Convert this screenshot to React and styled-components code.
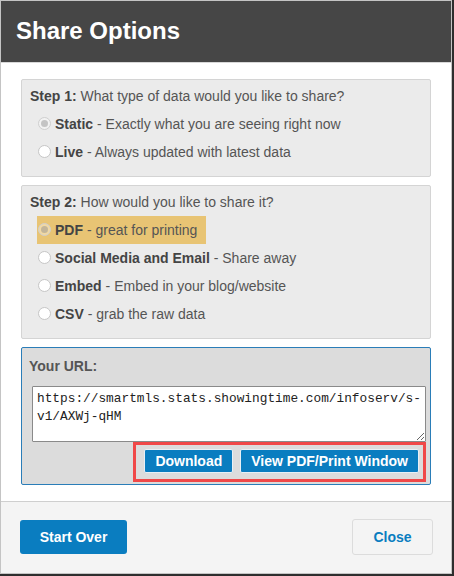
import React from 'react';
import styled, { createGlobalStyle } from 'styled-components';

const GlobalStyle = createGlobalStyle`
  html, body {
    margin: 0;
    padding: 0;
    background: #2e2e2e;
  }
  body {
    font-family: 'Liberation Sans', Arial, sans-serif;
  }
`;

const Modal = styled.div`
  width: 450px;
  height: 572px;
  border: 1px solid #c4c4c4;
  background: #fff;
  display: flex;
  flex-direction: column;
`;

const Header = styled.div`
  height: 61px;
  background: #464646;
  display: flex;
  align-items: center;
  padding-left: 15px;
  color: #fff;
  font-size: 24px;
  font-weight: bold;
  border-bottom: 1px solid #d8d8d8;
`;

const Body = styled.div`
  flex: 1;
  padding: 16px 20px 16px 20px;
  display: flex;
  flex-direction: column;
  gap: 8px;
`;

const StepBox = styled.div`
  background: #ebebeb;
  border: 1px solid #d4d4d4;
  border-radius: 2px;
  padding: 6px 8px 10px 8px;
  color: #555;
  font-size: 14px;
`;

const StepTitle = styled.div`
  line-height: 20px;
  margin-bottom: 4px;
  b {
    color: #444;
  }
`;

const OptionRow = styled.div`
  height: 28px;
  display: flex;
  align-items: center;
`;

const OptionLabel = styled.label`
  display: inline-flex;
  align-items: center;
  height: 28px;
  margin-left: 7px;
  padding: 0 9px 0 1px;
  gap: 4px;
  background: ${(p) => (p.$highlight ? '#e8c474' : 'transparent')};
  color: #555;
  b {
    color: #444;
  }
`;

const Radio = styled.span`
  width: 11px;
  height: 11px;
  border-radius: 50%;
  border: 1px solid ${(p) => (p.$checked ? '#cfcfcf' : '#c6c6c6')};
  background: ${(p) => (p.$checked ? 'rgba(255,255,255,0.35)' : '#fff')};
  display: inline-flex;
  align-items: center;
  justify-content: center;
  flex-shrink: 0;
  &::after {
    content: '';
    display: ${(p) => (p.$checked ? 'block' : 'none')};
    width: 7px;
    height: 7px;
    border-radius: 50%;
    background: rgba(140, 140, 140, 0.45);
  }
`;

const UrlBox = styled.div`
  background: #dcdcdc;
  border: 1px solid #2a7db8;
  border-radius: 2px;
  padding: 8px 4px 2px 10px;
  display: flex;
  flex-direction: column;
  align-items: flex-end;
`;

const UrlLabel = styled.div`
  align-self: flex-start;
  margin-left: -3px;
  font-size: 14px;
  font-weight: bold;
  color: #555;
  line-height: 20px;
  margin-bottom: 10px;
`;

const UrlText = styled.textarea`
  box-sizing: border-box;
  width: 394px;
  height: 56px;
  border: 1px solid #8a8a8a;
  border-radius: 1px;
  padding: 3px 4px;
  margin: 0;
  font-family: 'Liberation Mono', 'DejaVu Sans Mono', monospace;
  font-size: 12.8px;
  line-height: 18px;
  color: #222;
  background: #fff;
  resize: vertical;
  word-break: break-all;
  display: block;
`;

const ActionBox = styled.div`
  border: 3px solid #f04848;
  padding: 4px 4px 6px 8px;
  display: flex;
  gap: 7px;
`;

const SmallButton = styled.button`
  height: 24px;
  padding: 0 10px;
  background: #0a7dc0;
  border: 1px solid #e8f0f6;
  border-radius: 2px;
  color: #fff;
  font-family: 'Liberation Sans', Arial, sans-serif;
  font-size: 14px;
  font-weight: bold;
  cursor: pointer;
`;

const Footer = styled.div`
  height: 72px;
  background: #f4f4f4;
  border-top: 1px solid #cfcfcf;
  display: flex;
  align-items: center;
  justify-content: space-between;
  padding: 0 18px 0 19px;
`;

const FooterButton = styled.button`
  height: ${(p) => (p.$primary ? '34px' : '36px')};
  width: ${(p) => (p.$primary ? '107px' : '81px')};
  background: ${(p) => (p.$primary ? '#0a7dc0' : '#f4f4f4')};
  color: ${(p) => (p.$primary ? '#fff' : '#0a7dc0')};
  border: ${(p) => (p.$primary ? 'none' : '1px solid #dcdcdc')};
  border-radius: 3px;
  font-family: 'Liberation Sans', Arial, sans-serif;
  font-size: 14px;
  font-weight: bold;
  cursor: pointer;
`;

const step1 = [
  { name: 'Static', desc: 'Exactly what you are seeing right now', checked: true },
  { name: 'Live', desc: 'Always updated with latest data' },
];

const step2 = [
  { name: 'PDF', desc: 'great for printing', checked: true, highlight: true },
  { name: 'Social Media and Email', desc: 'Share away' },
  { name: 'Embed', desc: 'Embed in your blog/website' },
  { name: 'CSV', desc: 'grab the raw data' },
];

const Option = ({ item }) => (
  <OptionRow>
    <OptionLabel $highlight={item.highlight}>
      <Radio $checked={item.checked} />
      <span>
        <b>{item.name}</b> - {item.desc}
      </span>
    </OptionLabel>
  </OptionRow>
);

const App = () => {
  return (
    <>
      <GlobalStyle />
      <Modal>
        <Header>Share Options</Header>
        <Body>
          <StepBox>
            <StepTitle>
              <b>Step 1:</b> What type of data would you like to share?
            </StepTitle>
            {step1.map((item) => (
              <Option key={item.name} item={item} />
            ))}
          </StepBox>
          <StepBox>
            <StepTitle>
              <b>Step 2:</b> How would you like to share it?
            </StepTitle>
            {step2.map((item) => (
              <Option key={item.name} item={item} />
            ))}
          </StepBox>
          <UrlBox>
            <UrlLabel>Your URL:</UrlLabel>
            <UrlText
              readOnly
              value="https://smartmls.stats.showingtime.com/infoserv/s-v1/AXWj-qHM"
            />
            <ActionBox>
              <SmallButton>Download</SmallButton>
              <SmallButton>View PDF/Print Window</SmallButton>
            </ActionBox>
          </UrlBox>
        </Body>
        <Footer>
          <FooterButton $primary>Start Over</FooterButton>
          <FooterButton>Close</FooterButton>
        </Footer>
      </Modal>
    </>
  );
};

export default App;
